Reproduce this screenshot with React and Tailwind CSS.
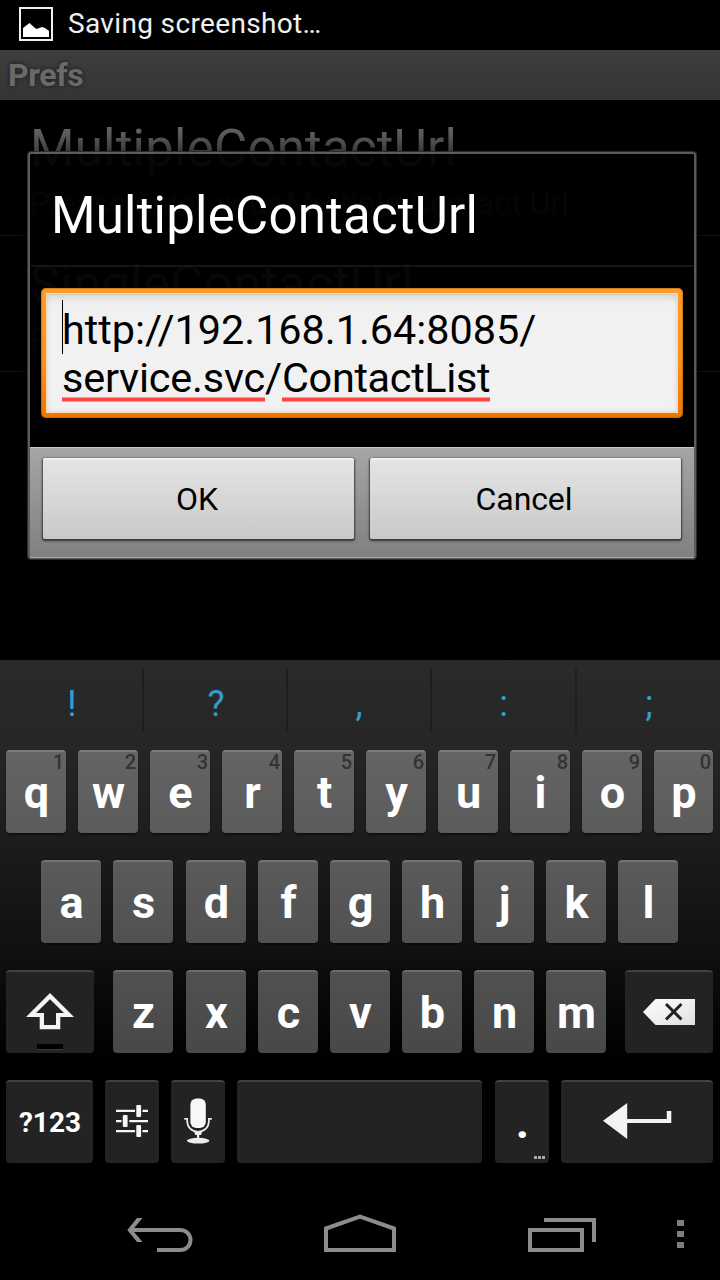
import React from "react";

const topRow = ["q", "w", "e", "r", "t", "y", "u", "i", "o", "p"];
const homeRow = ["a", "s", "d", "f", "g", "h", "j", "k", "l"];
const bottomRow = ["z", "x", "c", "v", "b", "n", "m"];

function PictureIcon() {
  return (
    <svg width="34" height="34" viewBox="19 7 34 34">
      <rect x="20" y="8" width="32" height="32" fill="none" stroke="#f0f0f0" strokeWidth="2" />
      <path d="M23 37V28L29.5 23L35 28L36.5 29L42 27L45 28L49 31V37Z" fill="#fff" />
    </svg>
  );
}

function ShiftIcon() {
  return (
    <svg width="48" height="38" viewBox="26 993 48 38">
      <path
        fill="#f4f4f4"
        fillRule="evenodd"
        d="M50 993L74 1017H60.3V1029.3H39.7V1017H26ZM50 999.3L36 1013H44V1025H56V1013H64Z"
      />
    </svg>
  );
}

function DeleteIcon() {
  return (
    <svg width="54" height="28" viewBox="642 998 54 28">
      <defs>
        <linearGradient id="del" x1="0" y1="0" x2="1" y2="1">
          <stop offset="0" stopColor="#fff" />
          <stop offset="1" stopColor="#e0e0e0" />
        </linearGradient>
      </defs>
      <path d="M643 1012L655.5 999H695V1025H655.5Z" fill="url(#del)" />
      <path d="M666 1004L681.5 1019.5M681.5 1004L666 1019.5" stroke="#222" strokeWidth="3" />
    </svg>
  );
}

function SettingsIcon() {
  return (
    <svg width="32" height="32" viewBox="116 1105 32 32" fill="#f6f6f6">
      <path d="M116 1109.7H135V1112H116ZM142.5 1109.7H148V1112H142.5ZM116 1120H121.5V1122.3H116ZM129.3 1120H148V1122.3H129.3ZM116 1130H135V1132.3H116ZM142.5 1130H148V1132.3H142.5Z" />
      <rect x="136.3" y="1105" width="4.8" height="12" rx="1" />
      <rect x="122.8" y="1115" width="4.8" height="12" rx="1" />
      <rect x="136.3" y="1125" width="4.8" height="12" rx="1" />
    </svg>
  );
}

function MicIcon() {
  return (
    <svg width="28" height="46" viewBox="184 1098 28 46">
      <rect x="190.4" y="1098.4" width="15.4" height="29.6" rx="6" fill="#f7f7f7" />
      <path
        d="M184.3 1118.8H187.2V1121C187.2 1127 191.5 1131.8 198 1131.8C204.5 1131.8 208.9 1127 208.9 1121V1118.8H211.8"
        fill="none"
        stroke="#ececec"
        strokeWidth="1.7"
      />
      <path d="M194 1131.5H202.3L201 1135H199.2V1139H197V1135H195.3Z" fill="#ececec" />
      <ellipse cx="198.2" cy="1140.7" rx="11.3" ry="2.9" fill="#ececec" />
    </svg>
  );
}

function EnterIcon() {
  return (
    <svg width="70" height="38" viewBox="602 1102 70 38">
      <path d="M603 1120.8L627.2 1103V1119H666.8V1111H671.3V1123H627.2V1139Z" fill="#f3f3f3" />
    </svg>
  );
}

function LetterKey({ label, hint, nudge, tone }) {
  return (
    <div
      className={`relative h-[83px] shrink-0 rounded-[4px] border-t-2 bg-gradient-to-b pl-px text-center text-[45px] leading-[81px] font-bold text-white shadow-[0_2px_1px_#0006] ${label === "p" ? "w-[59px]" : "w-[60px]"} ${tone} ${nudge ? "ml-px" : ""}`}
    >
      {hint && (
        <span className="absolute -top-px right-[2px] text-[20px] leading-[23px] font-medium text-[#333]">{hint}</span>
      )}
      {label}
    </div>
  );
}

function DarkKey({ className = "", children }) {
  return (
    <div
      className={`relative flex h-[83px] shrink-0 items-center justify-center rounded-[4px] border-t-2 border-[#414141] bg-[#232323] text-white ${className}`}
    >
      {children}
    </div>
  );
}

function PrefItem({ title, summary }) {
  return (
    <div className="h-[136px] border-b border-[#161616] pt-[19px] pl-[30px] whitespace-nowrap">
      <div className="h-[60px] text-[51px] leading-[60px] tracking-[0.22px] text-[#686868]">{title}</div>
      <div className="mt-[5px] h-[38px] text-[32px] leading-[38px] tracking-[0.1px] text-[#484848]">{summary}</div>
    </div>
  );
}

function DialogButton({ children }) {
  return (
    <div className="h-[81px] w-[311px] rounded-[2px] border-t-2 border-[#f0f0f0] bg-gradient-to-b from-[#e4e4e4] to-[#c9c9c9] pr-[3px] text-center text-[32px] leading-[79px] tracking-[-0.1px] text-black shadow-[0_1px_2px_1px_#0009]">
      {children}
    </div>
  );
}

function PrefDialog() {
  return (
    <div className="absolute top-[152px] left-[28px] h-[407px] w-[668px] rounded-[3px] border-2 border-[#5c5c5c] bg-black/93 shadow-[0_0_0_1px_#2c2c2c,0_0_28px_6px_#000000b0]">
      <div className="mr-[1px] ml-[1px] h-[113px] border-b-2 border-[#161616] pt-[32px] pl-[20px] text-[51px] leading-[60px] tracking-[0.22px] text-white">
        MultipleContactUrl
      </div>
      <div className="mt-[21px] ml-[11px] h-[130px] w-[642px] rounded-[5px] bg-gradient-to-b from-[#ff9c28] via-[#fb9520] to-[#ee7600] p-[5px] shadow-[inset_0_0_1px_1px_#8a501066]">
        <div className="h-[120px] border border-[#f9d9b4] bg-[#f1f1f1] pt-[12px] pl-[15px] text-[41.4px] leading-[48px] whitespace-nowrap text-black shadow-[inset_0_8px_10px_-4px_#0000001c,inset_0_0_5px_#00000018]">
          <div className="relative h-[48px] tracking-[-0.03px]">
            <span className="absolute -top-[6px] left-0 h-[54px] w-px bg-black" />
            http://192.168.1.64:8085/
          </div>
          <div className="flex h-[48px]">
            <span className="relative w-[203px] tracking-[-0.2px]">
              service.svc
              <span className="absolute bottom-0 left-0 h-[5px] w-[203px] border-y border-[#f99] bg-[#ff4444]" />
            </span>
            <span className="w-[17px]">/</span>
            <span className="relative w-[208px] tracking-[-0.33px]">
              ContactList
              <span className="absolute bottom-0 left-0 h-[5px] w-[208px] border-y border-[#f99] bg-[#ff4444]" />
            </span>
          </div>
        </div>
      </div>
      <div className="mt-[29px] flex h-[111px] justify-between border-t border-b border-t-[#c8c8c8] border-b-[#a6a6a6] bg-gradient-to-b from-[#a6a6a6] to-[#808080] px-[13px] pt-[10px]">
        <DialogButton>OK</DialogButton>
        <DialogButton>Cancel</DialogButton>
      </div>
    </div>
  );
}

function Keyboard() {
  return (
    <div className="h-[520px] bg-[linear-gradient(to_bottom,#2a2a2a_0px,#262626_90px,#101010_290px,#000_400px)]">
      <div className="flex h-[90px] pt-[9px] text-center text-[36px] leading-[70px] text-[#2f9fd0]">
        {["!", "?", ",", ":", ";"].map((c, i) => (
          <div
            key={c}
            className={`h-[64px] shrink-0 ${i < 4 ? "border-r-2 border-[#1e1e1e]" : ""} ${i === 3 ? "w-[145px]" : "w-[144px]"} ${i < 2 ? "pl-[2px]" : ""}`}
          >
            {c}
          </div>
        ))}
      </div>
      <div className="flex h-[110px] gap-[12px] pl-[6px]">
        {topRow.map((k, i) => (
          <LetterKey key={k} label={k} hint={String((i + 1) % 10)} tone="border-[#7c7c7c] from-[#646464] to-[#5b5b5b]" />
        ))}
      </div>
      <div className="flex h-[110px] gap-[12px] pl-[41px]">
        {homeRow.map((k) => (
          <LetterKey key={k} label={k} nudge={k === "d"} tone="border-[#747474] from-[#5a5a5a] to-[#515151]" />
        ))}
      </div>
      <div className="flex h-[110px] gap-[12px] pl-[6px]">
        <DarkKey className="mr-[7px] w-[88px] pb-px">
          <ShiftIcon />
          <span className="absolute bottom-[3px] left-[31px] h-[6px] w-[26px] border-b border-[#3c3c3c] bg-black" />
        </DarkKey>
        {bottomRow.map((k) => (
          <LetterKey key={k} label={k} nudge={k === "x"} tone="border-[#6c6c6c] from-[#515151] to-[#484848]" />
        ))}
        <DarkKey className="ml-[7px] w-[88px] pb-px">
          <DeleteIcon />
        </DarkKey>
      </div>
      <div className="flex gap-[12px] pl-[6px]">
        <DarkKey className="w-[87px] pl-px text-[28px] font-bold">?123</DarkKey>
        <DarkKey className="w-[54px] pb-[3px]">
          <SettingsIcon />
        </DarkKey>
        <DarkKey className="w-[54px] pb-[3px]">
          <MicIcon />
        </DarkKey>
        <DarkKey className="w-[245px]" />
        <DarkKey className="ml-px w-[54px] pl-px text-[46px] font-bold">
          .
          <span className="absolute right-[4px] bottom-[4px] flex gap-px">
            <span className="h-[3px] w-[3px] bg-[#aaa]" />
            <span className="h-[3px] w-[3px] bg-[#aaa]" />
            <span className="h-[3px] w-[3px] bg-[#aaa]" />
          </span>
        </DarkKey>
        <DarkKey className="w-[152px] pb-[3px]">
          <EnterIcon />
        </DarkKey>
      </div>
    </div>
  );
}

function NavBar() {
  return (
    <div className="flex h-[100px] items-start pt-[32px] pl-[126px]">
      <svg width="68" height="42" viewBox="126 1212 68 42" fill="none" stroke="#8c8c8c" strokeWidth="4">
        <path d="M130 1230H180.5A10 10 0 0 1 180.5 1250H157" />
        <path d="M127.3 1230L137 1218H142.5L132.5 1230L142.5 1242H137Z" fill="#8c8c8c" stroke="none" />
      </svg>
      <svg className="ml-[130px]" width="72" height="42" viewBox="324 1212 72 42" fill="none" stroke="#8c8c8c" strokeWidth="4">
        <path d="M326 1228.5L360 1216.5L394 1228.5V1250H326Z" />
      </svg>
      <svg className="ml-[132px]" width="68" height="42" viewBox="528 1212 68 42" fill="none" stroke="#8c8c8c" strokeWidth="4">
        <path d="M530 1230H582V1250H530ZM544 1220H594V1242" />
      </svg>
      <svg className="ml-[81px]" width="7" height="42" viewBox="677 1212 7 42" fill="#7d7d7d">
        <path d="M677 1220H684V1226H677ZM677 1231H684V1237H677ZM677 1242H684V1248H677Z" />
      </svg>
    </div>
  );
}

export default function App() {
  return (
    <div className="relative h-[1280px] w-[720px] overflow-hidden bg-black font-['Roboto',sans-serif]">
      <div className="flex h-[50px] items-start pt-[7px] pl-[19px]">
        <PictureIcon />
        <div className="-mt-[7px] ml-[15px] text-[28px] leading-[47px] tracking-[0.35px] text-[#f0f0f0]">Saving screenshot…</div>
      </div>
      <div className="h-[50px] bg-gradient-to-b from-[#3e3e3e] to-[#343434] pl-[8px] text-[32px] leading-[50px] font-bold tracking-[-0.4px] text-[#6a6a6a] [text-shadow:0_0_4px_#1a1a1a]">
        Prefs
      </div>
      <div className="h-[560px]">
        <PrefItem title="MultipleContactUrl" summary="Please enter your Multiple Contact Url" />
        <PrefItem title="SingleContactUrl" summary="Please enter your Single Contact Url" />
      </div>
      <Keyboard />
      <NavBar />
      <PrefDialog />
    </div>
  );
}
